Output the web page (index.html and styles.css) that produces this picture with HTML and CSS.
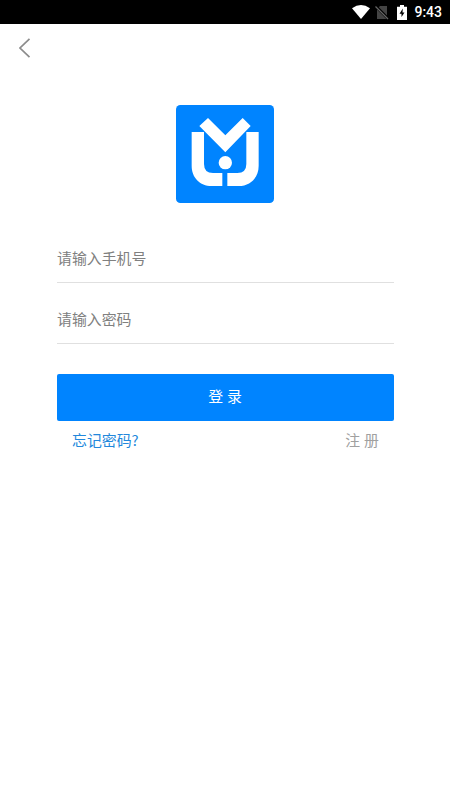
FILE: index.html
```html
<!DOCTYPE html>
<html lang="zh-CN">
<head>
<meta charset="utf-8">
<title>登录</title>
<link rel="stylesheet" href="styles.css">
</head>
<body>
<div class="status">
  <svg class="wifi" viewBox="0 0 18 14"><path d="M0 3.2Q9-3 18 3.2L9 14Z" fill="#fff"/></svg>
  <svg class="sim" viewBox="0 0 14 15"><path d="M5 1H12V14H2V4Z" fill="#444"/><path d="M.5 1L13.5 14" stroke="#000" stroke-width="3"/><path d="M.5 1.5L13 14" stroke="#666" stroke-width="1.2"/></svg>
  <svg class="battery" viewBox="0 0 10 15"><path d="M0 1.7H3V0H7V1.7H10V15H0Z" fill="#fff"/><path d="M5.8 3.5L2.5 8.8H4.5V12L7.5 7.5H5.5Z" fill="#000"/></svg>
  <span class="time">9:43</span>
</div>
<header class="nav">
  <svg class="back" viewBox="0 0 12 20"><path d="M10.5 .8L1 10L10.5 19.2" fill="none" stroke="#8c8c8c" stroke-width="1.7"/></svg>
</header>
<main class="login">
  <svg class="logo" viewBox="19 21 294 294">
    <rect x="19" y="21" width="294" height="294" rx="13" fill="#0084ff"/>
    <g fill="#fff">
      <path d="M89 84L115 60L167 112L219 60L243 84L167 163Z"/>
      <circle cx="167" cy="194" r="20"/>
      <path d="M66 102H103V198Q103 225 130 225H158V264H126C90 264 66 238 66 203Z"/>
      <path d="M267 102H230V198Q230 225 203 225H173V264H207C243 264 267 238 267 203Z"/>
    </g>
  </svg>
  <div class="field">请输入手机号</div>
  <div class="field">请输入密码</div>
  <div class="submit">登 录</div>
  <div class="links"><span class="forgot">忘记密码?</span><span class="register">注 册</span></div>
</main>
</body>
</html>
```
FILE: styles.css
```css
* { box-sizing: border-box; }
body {
  margin: 0;
  height: 800px;
  overflow: hidden;
  background: #fff;
  font: 400 14.9px/22px "Noto Sans CJK SC", sans-serif;
}
.status {
  height: 24px;
  padding-right: 8px;
  display: flex;
  align-items: center;
  justify-content: flex-end;
  background: #000;
  color: #fff;
}
.wifi { width: 18px; height: 14px; margin-right: 5px; }
.sim { width: 14px; height: 15px; margin-right: 8px; }
.battery { width: 10px; height: 15px; margin-right: 7px; }
.time { font: 500 14px/25px Roboto, sans-serif; }
.nav {
  height: 48px;
  padding: 14px 19px;
}
.back { display: block; width: 12px; height: 20px; }
.login {
  display: flex;
  flex-direction: column;
  padding: 33px 56px 0 57px;
}
.logo {
  width: 98px;
  height: 98px;
  align-self: center;
  margin: 0 1px 19px 0;
}
.field {
  height: 61px;
  padding-top: 25px;
  border-bottom: 1px solid #e0e0e0;
  color: #808080;
}
.submit {
  height: 47px;
  margin-top: 30px;
  padding-right: 1px;
  border-radius: 2px;
  background: #0084ff;
  color: #fff;
  line-height: 44px;
  text-align: center;
  word-spacing: .5px;
}
.links {
  display: flex;
  justify-content: space-between;
  padding: 8px 15px 0;
}
.forgot { color: #2288dc; }
.register { color: #a0a0a0; word-spacing: .7px; }
```
